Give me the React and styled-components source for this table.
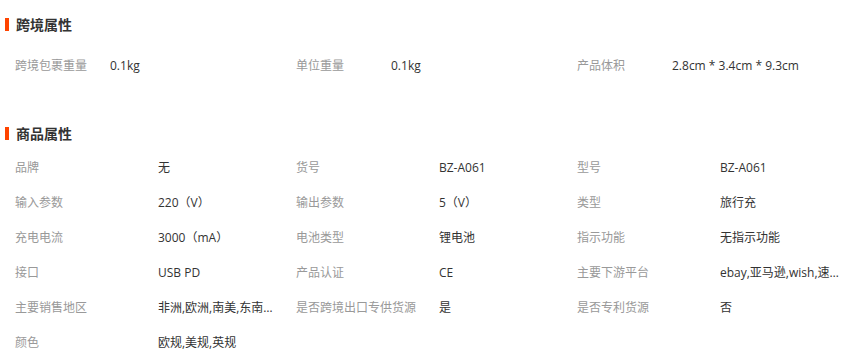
import React from 'react';
import styled, { createGlobalStyle } from 'styled-components';

const GlobalStyle = createGlobalStyle`
  html, body {
    margin: 0;
    padding: 0;
    background: #ffffff;
  }
  body {
    font-family: "Open Sans", "Noto Sans CJK SC", sans-serif;
    font-size: 12px;
    color: #333333;
  }
`;

const Page = styled.div`
  width: 848px;
  height: 357px;
  overflow: hidden;
`;

const Section = styled.section`
  margin-top: ${(p) => p.$top}px;
`;

const Heading = styled.h3`
  display: flex;
  align-items: center;
  gap: 7px;
  margin: 0 0 ${(p) => p.$gap}px 5px;
  height: 20px;
  font-family: "Noto Sans CJK SC", sans-serif;
  font-size: 14px;
  font-weight: 700;
  color: #333333;

  &::before {
    content: '';
    display: block;
    width: 4px;
    height: 13px;
    background: #ff4400;
  }
`;

const Grid = styled.div`
  display: grid;
  grid-template-columns: repeat(3, 281px);
  padding-left: 15px;
`;

const Cell = styled.div`
  display: flex;
  height: 35px;
  line-height: 35px;
  min-width: 0;
`;

const Label = styled.span`
  flex: 0 0 ${(p) => p.$w}px;
  color: #999999;
  white-space: nowrap;
`;

const Value = styled.span`
  width: 124px;
  color: #333333;
  white-space: nowrap;
  overflow: hidden;
  text-overflow: ellipsis;
  ${(p) => p.$wide && 'width: auto; overflow: visible;'}
`;

const crossBorder = [
  ['跨境包裹重量', '0.1kg'],
  ['单位重量', '0.1kg'],
  ['产品体积', '2.8cm * 3.4cm * 9.3cm'],
];

const product = [
  ['品牌', '无'],
  ['货号', 'BZ-A061'],
  ['型号', 'BZ-A061'],
  ['输入参数', '220（V）'],
  ['输出参数', '5（V）'],
  ['类型', '旅行充'],
  ['充电电流', '3000（mA）'],
  ['电池类型', '锂电池'],
  ['指示功能', '无指示功能'],
  ['接口', 'USB PD'],
  ['产品认证', 'CE'],
  ['主要下游平台', 'ebay,亚马逊,wish,速卖通'],
  ['主要销售地区', '非洲,欧洲,南美,东南亚,北美'],
  ['是否跨境出口专供货源', '是'],
  ['是否专利货源', '否'],
  ['颜色', '欧规,美规,英规'],
];

function AttrGrid({ items, labelWidth, wide }) {
  return (
    <Grid>
      {items.map(([label, value]) => (
        <Cell key={label}>
          <Label $w={labelWidth}>{label}</Label>
          <Value $wide={wide}>{value}</Value>
        </Cell>
      ))}
    </Grid>
  );
}

export default function App() {
  return (
    <>
      <GlobalStyle />
      <Page>
        <Section $top={14}>
          <Heading $gap={14}>跨境属性</Heading>
          <AttrGrid items={crossBorder} labelWidth={95} wide />
        </Section>
        <Section $top={40}>
          <Heading $gap={7}>商品属性</Heading>
          <AttrGrid items={product} labelWidth={143} />
        </Section>
      </Page>
    </>
  );
}
